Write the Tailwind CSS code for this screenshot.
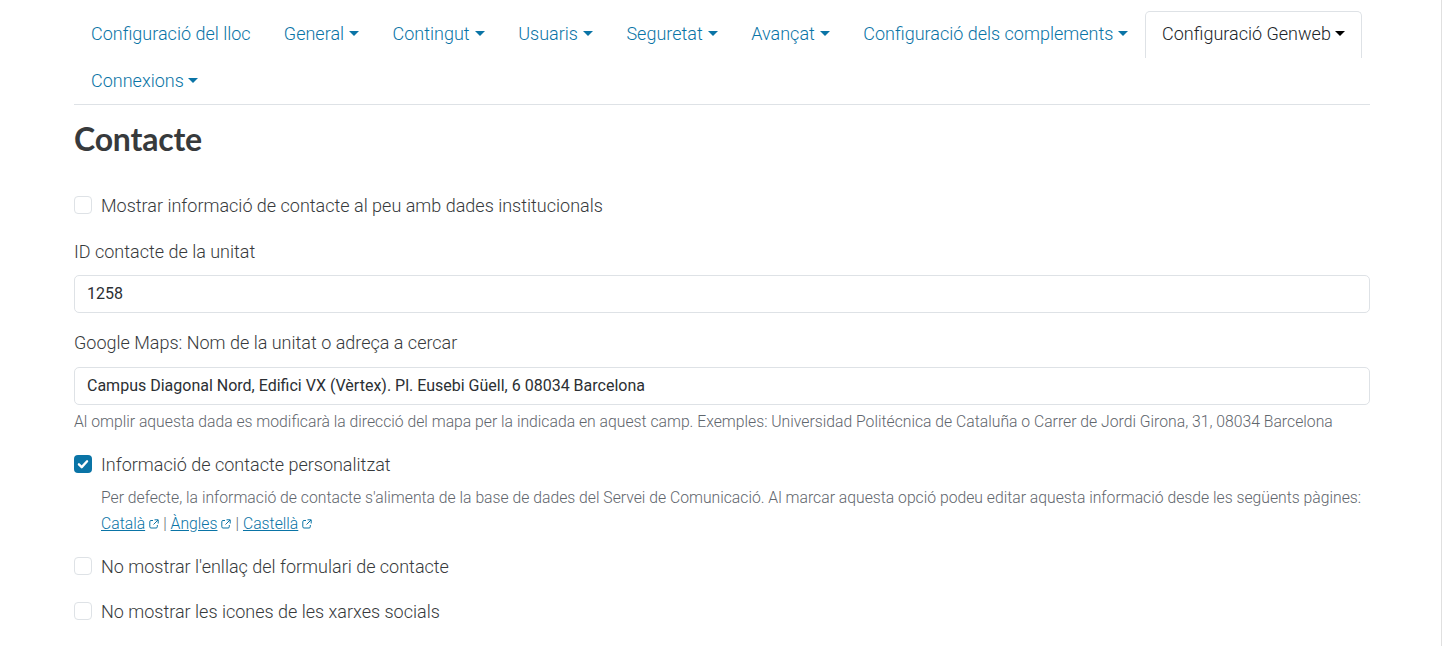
<!DOCTYPE html>
<html lang="ca">
<head>
    <meta charset="UTF-8">
    <meta name="viewport" content="width=device-width, initial-scale=1.0">
    <title>Contacte</title>
    <script src="https://cdn.jsdelivr.net/npm/@tailwindcss/browser@4"></script>
</head>
<body class="bg-white font-['Roboto',sans-serif] font-light text-[#373a3c] overflow-hidden h-[646px]">
<div class="border-r border-[#e0e0e0] w-[1442px] h-[646px]">
    <div class="ml-[74px] w-[1296px] pt-[11px]">

        <ul class="flex flex-wrap border-b border-[#dee2e6] text-[18px] leading-[29px] text-[#0a74a6] h-[94px]">
            <li><a class="block h-[47px] pl-[17px] pr-[16.5px] pt-[8px]">Configuració del lloc</a></li>
            <li><a class="flex items-center h-[47px] px-[16.75px] pt-[7px] pb-[9px]">General<span class="ml-[5px] border-x-[5px] border-t-[5px] border-x-transparent border-t-[#0a74a6]"></span></a></li>
            <li><a class="flex items-center h-[47px] px-[16.75px] pt-[7px] pb-[9px]">Contingut<span class="ml-[5px] border-x-[5px] border-t-[5px] border-x-transparent border-t-[#0a74a6]"></span></a></li>
            <li><a class="flex items-center h-[47px] px-[16.75px] pt-[7px] pb-[9px]">Usuaris<span class="ml-[5px] border-x-[5px] border-t-[5px] border-x-transparent border-t-[#0a74a6]"></span></a></li>
            <li><a class="flex items-center h-[47px] px-[16.75px] pt-[7px] pb-[9px]">Seguretat<span class="ml-[5px] border-x-[5px] border-t-[5px] border-x-transparent border-t-[#0a74a6]"></span></a></li>
            <li><a class="flex items-center h-[47px] px-[16.75px] pt-[7px] pb-[9px]">Avançat<span class="ml-[5px] border-x-[5px] border-t-[5px] border-x-transparent border-t-[#0a74a6]"></span></a></li>
            <li><a class="flex items-center h-[47px] px-[16.75px] pt-[7px] pb-[9px]">Configuració dels complements<span class="ml-[5px] border-x-[5px] border-t-[5px] border-x-transparent border-t-[#0a74a6]"></span></a></li>
            <li><a class="flex items-center h-[47px] px-[16px] pt-[6px] pb-[9px] border border-b-0 border-[#dee2e6] rounded-t-[5px] text-[#212529] bg-white">Configuració Genweb<span class="ml-[4px] border-x-[5px] border-t-[5px] border-x-transparent border-t-black"></span></a></li>
            <li><a class="flex items-center h-[47px] px-[17px] pt-[7px] pb-[9px]">Connexions<span class="ml-[4px] border-x-[5px] border-t-[5px] border-x-transparent border-t-[#0a74a6]"></span></a></li>
        </ul>

        <h1 class="font-['Lato',sans-serif] font-bold text-[32px] leading-[38px] tracking-[-0.2px] text-[#373a3c] mt-[15px]">Contacte</h1>

        <label class="flex items-center mt-[35px] h-[24px] text-[18px]">
            <span class="w-[18px] h-[18px] border border-[#dee2e6] rounded-[4px] bg-white"></span>
            <span class="ml-[9px]">Mostrar informació de contacte al peu amb dades institucionals</span>
        </label>

        <label class="block mt-[23px] text-[18px] leading-[24px]">ID contacte de la unitat</label>
        <div class="mt-[11px] h-[38px] border border-[#dee2e6] rounded-[5px] px-[12px] flex items-center text-[16px] font-normal text-[#2b2f33]">1258</div>

        <label class="block mt-[18px] text-[18px] leading-[24px]">Google Maps: Nom de la unitat o adreça a cercar</label>
        <div class="mt-[12px] h-[38px] border border-[#dee2e6] rounded-[5px] px-[12px] flex items-center text-[16px] font-normal text-[#2b2f33]">Campus Diagonal Nord, Edifici VX (Vèrtex). Pl. Eusebi Güell, 6 08034 Barcelona</div>
        <p class="mt-[6px] text-[15.74px] leading-[21px] text-[#5f666d]">Al omplir aquesta dada es modificarà la direcció del mapa per la indicada en aquest camp. Exemples: Universidad Politécnica de Cataluña o Carrer de Jordi Girona, 31, 08034 Barcelona</p>

        <label class="flex items-center mt-[20px] h-[24px] text-[18px]">
            <span class="w-[18px] h-[18px] rounded-[4px] bg-[#0a74a6] flex items-center justify-center">
                <svg width="14" height="14" viewBox="0 0 12 12" fill="none" stroke="#fff" stroke-width="2" stroke-linecap="round" stroke-linejoin="round"><path d="M2.5 6.3l2.4 2.4 4.6-5"/></svg>
            </span>
            <span class="ml-[9px]">Informació de contacte personalitzat</span>
        </label>
        <div class="ml-[27px] mt-[9px] text-[15.74px] leading-[26px] text-[#5f666d]">
            <p>Per defecte, la informació de contacte s'alimenta de la base de dades del Servei de Comunicació. Al marcar aquesta opció podeu editar aquesta informació desde les següents pàgines:</p>
            <p class="flex items-center">
                <a class="underline text-[#0a74a6]">Català</a>
                <svg class="ml-[4px]" width="10" height="10" viewBox="0 0 10 10" fill="none" stroke="#0a74a6" stroke-width="1"><path d="M4 1.5H2A1.2 1.2 0 0 0 .8 2.7v5.1A1.2 1.2 0 0 0 2 9h5.1a1.2 1.2 0 0 0 1.2-1.2V6M5.5.8h3.7v3.7M9 1L4.5 5.5"/></svg>
                <span class="mx-[4px]">|</span>
                <a class="underline text-[#0a74a6]">Àngles</a>
                <svg class="ml-[4px]" width="10" height="10" viewBox="0 0 10 10" fill="none" stroke="#0a74a6" stroke-width="1"><path d="M4 1.5H2A1.2 1.2 0 0 0 .8 2.7v5.1A1.2 1.2 0 0 0 2 9h5.1a1.2 1.2 0 0 0 1.2-1.2V6M5.5.8h3.7v3.7M9 1L4.5 5.5"/></svg>
                <span class="mx-[4px]">|</span>
                <a class="underline text-[#0a74a6]">Castellà</a>
                <svg class="ml-[4px]" width="10" height="10" viewBox="0 0 10 10" fill="none" stroke="#0a74a6" stroke-width="1"><path d="M4 1.5H2A1.2 1.2 0 0 0 .8 2.7v5.1A1.2 1.2 0 0 0 2 9h5.1a1.2 1.2 0 0 0 1.2-1.2V6M5.5.8h3.7v3.7M9 1L4.5 5.5"/></svg>
            </p>
        </div>

        <label class="flex items-center mt-[17px] h-[24px] text-[18px]">
            <span class="w-[18px] h-[18px] border border-[#dee2e6] rounded-[4px] bg-white"></span>
            <span class="ml-[9px]">No mostrar l'enllaç del formulari de contacte</span>
        </label>
        <label class="flex items-center mt-[21px] h-[24px] text-[18px]">
            <span class="w-[18px] h-[18px] border border-[#dee2e6] rounded-[4px] bg-white"></span>
            <span class="ml-[9px]">No mostrar les icones de les xarxes socials</span>
        </label>
    </div>
</div>
</body>
</html>
